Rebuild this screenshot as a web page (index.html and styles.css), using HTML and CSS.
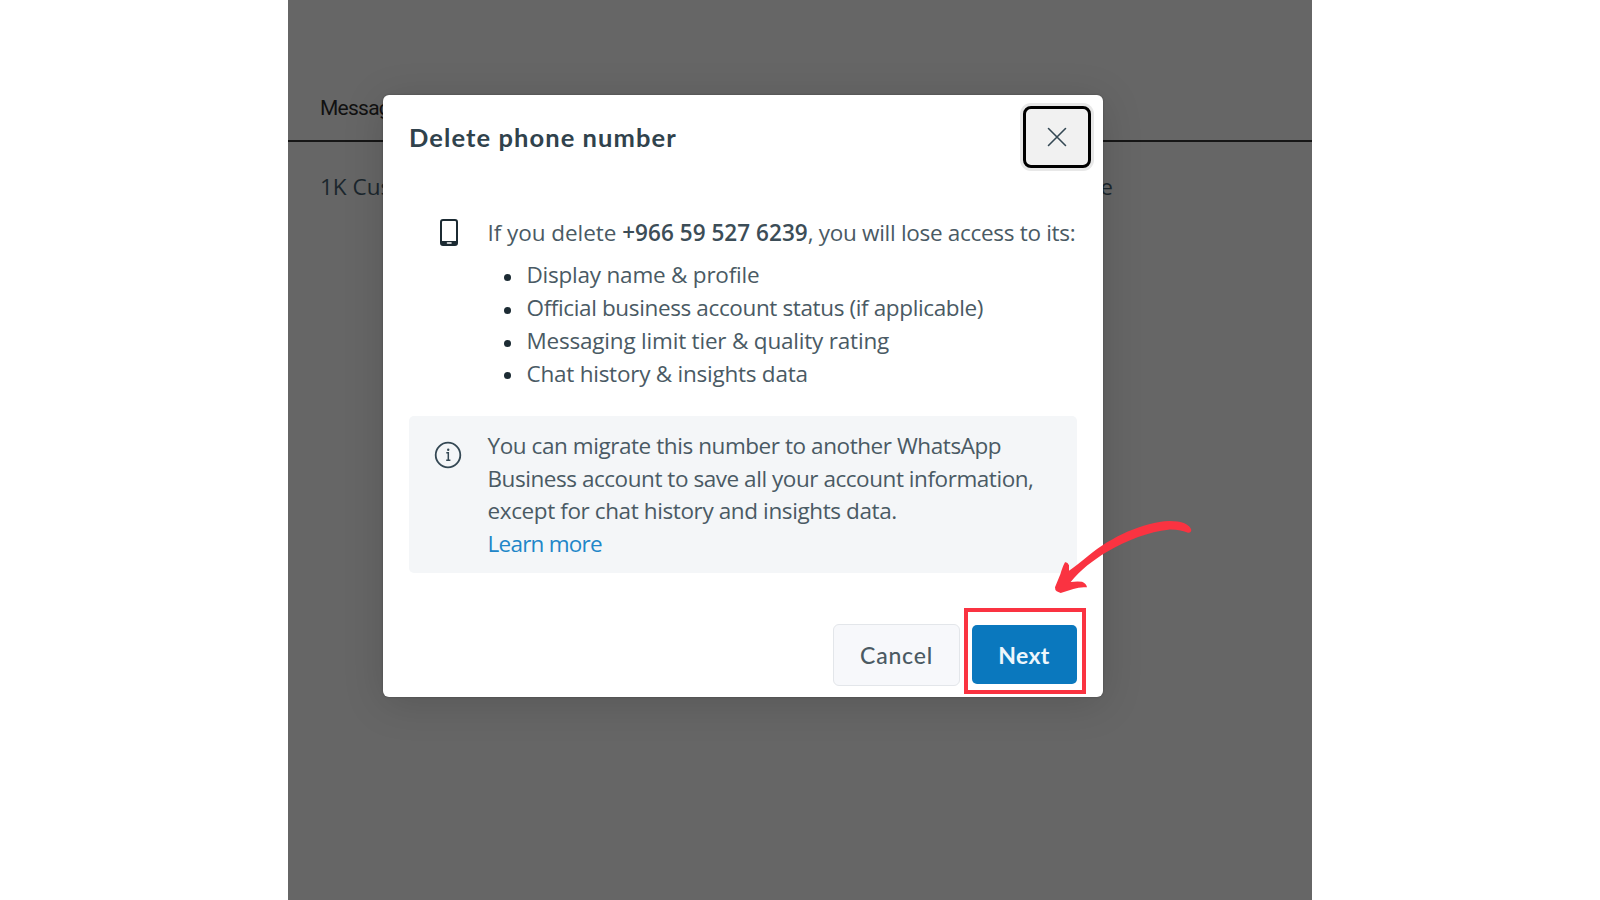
FILE: index.html
```html
<!DOCTYPE html>
<html lang="en">
<head>
<meta charset="utf-8">
<title>Delete phone number</title>
<link rel="stylesheet" href="styles.css">
</head>
<body>
<main class="stage">
  <div class="table">
    <div class="table-head"><span class="th">Messag</span></div>
    <div class="table-row"><span>1K Cus</span><span class="cell-end">e</span></div>
  </div>
  <section class="dialog" role="dialog">
    <header class="dialog-head">
      <h1 class="title"><span>Delete phone number</span></h1>
      <button class="close" aria-label="Close">
        <svg width="20" height="20" viewBox="0 0 20 20"><path d="M1.5 1.5 18.5 18.5M18.5 1.5 1.5 18.5" fill="none" stroke="#344854" stroke-width="1.6" stroke-linecap="round"/></svg>
      </button>
    </header>
    <div class="loss">
      <svg class="phone" width="18" height="27" viewBox="0 0 18 27"><rect x="1" y="1" width="16" height="25" rx="2" fill="#fff" stroke="#1c2b33" stroke-width="2"/><path d="M1 22h16v2.500a1.500 1.500 0 0 1-1.500 1.500h-13a1.500 1.500 0 0 1-1.500-1.500z" fill="#1c2b33"/><path d="M7.500 24h3.500" stroke="#fff" stroke-width="1.600" stroke-linecap="round"/></svg>
      <div class="loss-text">
        <p class="line"><span class="l1">If you delete </span><b class="l2">+966 59 527 6239</b><span class="l3">, you will lose access to its:</span></p>
        <ul class="list">
          <li><span class="i1">Display name &amp; profile</span></li>
          <li><span class="i2">Official business account status (if applicable)</span></li>
          <li><span class="i3">Messaging limit tier &amp; quality rating</span></li>
          <li><span class="i4">Chat history &amp; insights data</span></li>
        </ul>
      </div>
    </div>
    <div class="note">
      <svg class="info" width="28" height="28" viewBox="0 0 28 28"><circle cx="14" cy="14" r="12.300" fill="none" stroke="#344854" stroke-width="1.800"/><path d="M12.300 11.800h2v7.200M12.200 19.200h4.200" fill="none" stroke="#344854" stroke-width="1.500"/><circle cx="14.200" cy="8.800" r="1.200" fill="#344854"/></svg>
      <div class="note-text">
        <p><span class="n1">You can migrate this number to another WhatsApp</span></p>
        <p><span class="n2">Business account to save all your account information,</span></p>
        <p><span class="n3">except for chat history and insights data.</span></p>
        <p><a class="n4">Learn more</a></p>
      </div>
    </div>
    <footer class="actions">
      <button class="cancel"><span>Cancel</span></button>
      <button class="next"><span>Next</span></button>
    </footer>
  </section>
  <div class="highlight"></div>
  <svg class="arrow" width="180" height="110" viewBox="0 0 540 330"><path d="M484 90C480 73 455 63 418 63C340 66 245 110 175 167Q140 196 117 212L117 196Q112 185 105 187Q98 199 91 223L75 262Q75 272 80 274L92 279L130 267Q150 260 171 262Q169 250 156 245Q139 243 122 246C150 211 190 180 230 156C290 120 360 94 415 89C440 88 460 93 474 98Q483 99 484 90Z" fill="#fa3341"/></svg>
</main>
</body>
</html>
```
FILE: styles.css
```css
* { box-sizing: border-box; }
body { margin: 0; width: 1600px; height: 900px; overflow: hidden; background: #fff; font-family: "Open Sans", "Noto Sans", sans-serif; font-size: 22.5px; color: #4a5a64; }
h1, p, ul { margin: 0; padding: 0; }
button { font: inherit; padding: 0; }
svg { flex: none; }
.stage { position: relative; width: 1024px; height: 900px; margin: 0 auto; padding: 95px 209px 0 95px; background: #666; overflow: hidden; }
.table { position: absolute; inset: 0; color: #1b262d; }
.table-head { height: 142px; padding: 93px 0 0 32px; border-bottom: 2px solid #161616; font: 21px/30px Roboto, sans-serif; letter-spacing: -.75px; color: #111; }
.table-row { display: flex; justify-content: space-between; padding: 29px 199px 0 32px; line-height: 32px; font-size: 22.5px; }
.dialog { position: relative; width: 719.5px; height: 602px; padding: 11px 26px 0; background: #fff; border-radius: 6px; box-shadow: 0 6px 40px rgba(0,0,0,.15), 0 0 2px rgba(0,0,0,.3); white-space: nowrap; }
.dialog-head { display: flex; justify-content: space-between; height: 62px; margin-right: -14px; }
.title { font: 700 25.5px/62px Lato, sans-serif; color: #30424c; letter-spacing: 1.08px; }
.close { display: grid; place-items: center; width: 68px; height: 62px; border: 3px solid #000; border-radius: 8px; background: #f1f1f1; box-shadow: 0 0 0 3px #e8e8e8; }
.loss { display: flex; height: 247.5px; padding: 49px 0 0 31px; }
.phone { margin-top: 2px; }
.loss-text { margin-left: 29.500px; }
.line { line-height: 32.7px; }
.line b { font-weight: 600; color: #3c4d57; }
.list { list-style: none; margin-top: 9.5px; line-height: 32.8px; }
.list li { display: flex; align-items: center; padding-left: 16px; }
.list li::before { content: ""; width: 7px; height: 7px; margin: 4px 16px 0 0; border-radius: 50%; background: #1c2b33; }
.l1 { letter-spacing: -.05px; }
.l2 { letter-spacing: .05px; }
.l3 { letter-spacing: -.3px; }
.i1 { letter-spacing: -.22px; }
.i2 { letter-spacing: -.37px; }
.i3 { letter-spacing: -.2px; }
.i4 { letter-spacing: -.24px; }
.n1 { letter-spacing: -.43px; }
.n2 { letter-spacing: -.45px; }
.n3 { letter-spacing: -.39px; }
.n4 { letter-spacing: -.75px; }
.note { display: flex; height: 157px; padding: 14.5px 0 0 25px; background: #f4f6f8; border-radius: 5px; }
.info { margin-top: 11px; }
.note-text { margin-left: 25.5px; line-height: 32.7px; }
.note a { color: #2186c8; }
.actions { display: flex; justify-content: flex-end; align-items: center; gap: 11.5px; height: 62px; margin-top: 51px; font-family: Lato, sans-serif; font-size: 23px; }
.cancel { width: 127px; height: 62px; border: 1.5px solid #e3e6ea; border-radius: 6px; background: #f7f8fb; color: #4b5a63; font-weight: 500; letter-spacing: .8px; }
.next { width: 105px; height: 59px; border: 0; border-radius: 5px; background: #0a78be; color: #edf6fc; font-weight: 700; letter-spacing: .4px; }
.highlight { position: absolute; left: 676px; top: 608px; width: 122px; height: 86px; border: 4px solid #fa3341; }
.arrow { position: absolute; left: 742px; top: 500px; }
```
